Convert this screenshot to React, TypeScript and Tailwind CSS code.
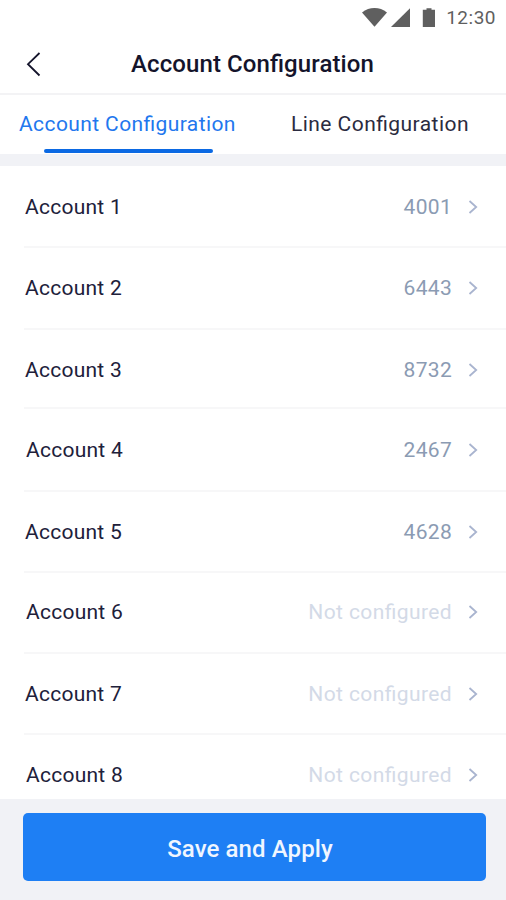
type Account = {
  name: string;
  value?: string;
  row: string;
};

const accounts: Account[] = [
  { name: "Account 1", value: "4001", row: "h-[82px] pl-[25px] pt-[26px]" },
  { name: "Account 2", value: "6443", row: "h-[82px] pl-[25px] pt-[25px]" },
  { name: "Account 3", value: "8732", row: "h-[79px] pl-[25px] pt-[25px]" },
  { name: "Account 4", value: "2467", row: "h-[83px] pl-[26px] pt-[26px]" },
  { name: "Account 5", value: "4628", row: "h-[81px] pl-[25px] pt-[25px]" },
  { name: "Account 6", row: "h-[81px] pl-[26px] pt-[24px]" },
  { name: "Account 7", row: "h-[81px] pl-[25px] pt-[25px]" },
  { name: "Account 8", row: "h-[81px] pl-[26px] pt-[25px]" },
];

function StatusBar() {
  return (
    <div className="flex h-[35px] items-center justify-end pr-[10px] text-[#5f5f5f]">
      <svg width="77" height="20" viewBox="0 0 77 20" fill="currentColor">
        <path d="M0 4.600C3.800 1.400 8 0 12.500 0s8.700 1.400 12.500 4.600L12.500 18.800z" />
        <path d="M48 .3V19H29z" />
        <path d="M64.500 .3h5V1.800h3.500V19H60.800V1.800H64.500z" />
      </svg>
      <span className="ml-[7px] text-[19px] leading-5 tracking-[0.5px]">12:30</span>
    </div>
  );
}

function Header() {
  return (
    <header className="flex h-[60px] items-center border-b-2 border-[#f3f3f5] text-[#14142b]">
      <svg className="ml-[26px]" width="16" height="26" viewBox="0 0 16 26" fill="none" stroke="currentColor" strokeWidth="1.8">
        <path d="M13.500 2L2 13.200L13.500 24.500" />
      </svg>
      <h1 className="-mt-px ml-[89px] text-[24px] font-medium tracking-[0.1px]">Account Configuration</h1>
    </header>
  );
}

function Tabs() {
  return (
    <nav className="flex h-[59px] text-[21px] tracking-[0.4px]">
      <button className="flex w-[256px] flex-col items-start text-left text-[#2277ee]">
        <span className="ml-[19px] mt-[14px] leading-[30px]">Account Configuration</span>
        <span className="ml-11 mt-[10px] h-1 w-[169px] rounded-full bg-[#0b69e3]" />
      </button>
      <button className="flex">
        <span className="ml-[35px] mt-[14px] leading-[30px] tracking-[0.45px] text-[#2b2b40]">Line Configuration</span>
      </button>
    </nav>
  );
}

function AccountRow({ account }: { account: Account }) {
  return (
    <div className={`flex items-start pr-[28px] leading-[30px] ${account.row}`}>
      <span className="tracking-[0.25px] text-[#20203a]">{account.name}</span>
      {account.value ? (
        <span className="ml-auto text-[#8b9bb3]">{account.value}</span>
      ) : (
        <span className="ml-auto tracking-[0.4px] text-[#d3dae7]">Not configured</span>
      )}
      <svg className="ml-4 mt-[7px]" width="10" height="16" viewBox="0 0 10 16" fill="none" stroke="#a9b4cf" strokeWidth="1.8">
        <path d="M1.500 2L8.200 8L1.500 14" />
      </svg>
    </div>
  );
}

export default function App() {
  return (
    <div className="flex h-[900px] w-[506px] flex-col overflow-hidden bg-white font-['Roboto',sans-serif] [font-feature-settings:'liga']">
      <StatusBar />
      <Header />
      <Tabs />
      <div className="h-3 shrink-0 bg-[#f1f2f6]" />
      <ul className="h-[633px] overflow-hidden text-[21px] tracking-[0.3px]">
        {accounts.map((account, i) => (
          <li key={account.name}>
            {i > 0 && <div className="-mt-0.5 ml-6 h-0.5 bg-[#f7f7f8]" />}
            <AccountRow account={account} />
          </li>
        ))}
      </ul>
      <footer className="h-[101px] shrink-0 bg-[#f1f2f6] pl-[23px] pt-[14px]">
        <button className="h-[68px] w-[463px] rounded-[5px] bg-[#1e7ff4] pr-[9px] pt-[3px] text-[24px] font-medium tracking-[0.1px] text-[#f0f6ff]">
          Save and Apply
        </button>
      </footer>
    </div>
  );
}
